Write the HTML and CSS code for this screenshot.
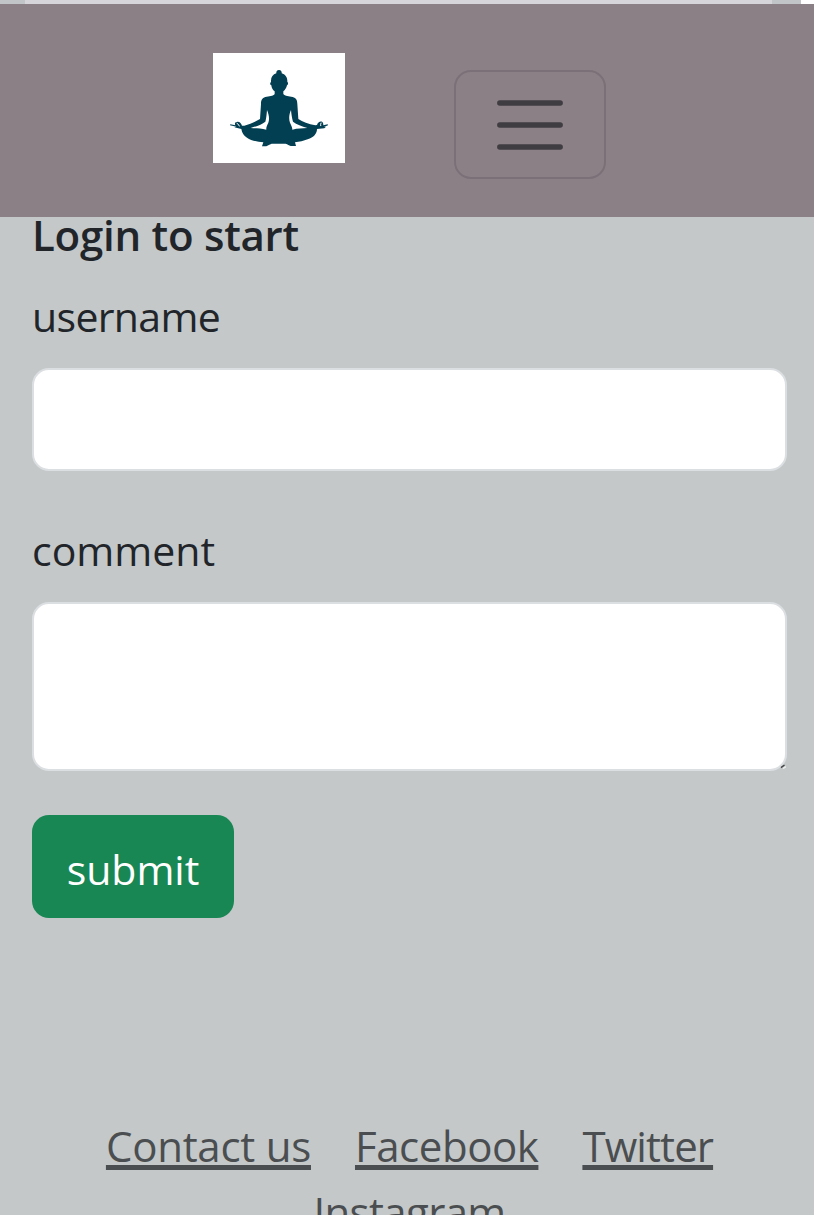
FILE: index.html
```html
<!DOCTYPE html>
<html lang="en">
<head>
<meta charset="utf-8">
<title>Login</title>
<link rel="stylesheet" href="styles.css">
</head>
<body>
<div class="top-strip"><span class="strip-mid"></span><span class="strip-end"></span></div>
<header class="navbar">
  <a class="brand" aria-label="Home">
    <svg viewBox="24 24 396 330" width="132" height="110">
      <path fill="#033f52" d="M222 75C228 75 231 80 230 85C240 88 247 96 247 107L247 111C251 113 249 120 246 121C244 129 240 135 235 139L235 147C240 154 252 153 263 156C274 159 277 166 277 177L280 222C293 230 310 237 331 241L336 240C338 232 345 228 351 230C355 233 355 238 355 241L368 238L369 241L356 246L363 245L358 250L336 252C336 266 326 277 308 283C296 288 283 290 270 292L273 303L257 303C252 301 248 298 242 296L200 296C194 298 189 301 184 304L171 304L175 292C158 290 139 287 126 278C116 272 111 264 109 252L88 247L94 245L75 241L76 238L91 241C88 234 91 230 98 230C105 230 109 236 111 242L118 242C135 237 152 230 165 222L168 177C168 166 171 159 181 156C192 153 205 154 209 147L209 139C203 135 200 129 199 121C195 120 194 113 198 111L198 107C198 96 204 88 214 85C213 80 216 75 222 75Z"/>
      <path fill="#fff" d="M186 195C192 209 194 222 190 233C187 240 183 246 184 254C167 249 151 251 137 249C155 244 171 238 181 230C184 220 185 207 186 195ZM258 195C252 209 251 222 255 233C258 240 262 246 262 254C278 249 291 251 307 249C290 244 275 238 264 230C261 220 259 207 258 195Z"/>
      <path fill="none" stroke="#fff" stroke-width="3" stroke-linecap="round" d="M96 235q5 2 7 8M348 234q-2 4-1 8"/>
    </svg>
  </a>
  <button class="toggler" aria-label="Menu">
    <svg viewBox="0 0 66 66" width="66" height="66"><path d="M2.800 11H63.200M2.800 33H63.200M2.800 55H63.200" stroke="#3f3d41" stroke-width="5.400" stroke-linecap="round"/></svg>
  </button>
</header>
<main class="content">
  <h1 class="title">Login to start</h1>
  <label class="label label-user" for="username">username</label>
  <input class="field" id="username" type="text">
  <label class="label label-comment" for="comment">comment</label>
  <div class="area-wrap">
    <textarea class="field area" id="comment"></textarea>
    <svg class="grip" viewBox="0 0 6 6" width="6" height="6"><path d="M1 4.600 4.500 2" stroke="#444" stroke-width="1.500"/><path d="M3 5.500 6 3.500" stroke="#eee" stroke-width="1.500"/></svg>
  </div>
  <button class="submit">submit</button>
</main>
<footer class="footer">
  <a class="contact">Contact us</a>
  <a class="facebook">Facebook</a>
  <a class="twitter">Twitter</a>
  <a class="instagram">Instagram</a>
</footer>
</body>
</html>
```
FILE: styles.css
```css
* { box-sizing: border-box; }
html, body { height: 1215px; overflow: hidden; }
body {
  margin: 0;
  background: #c4c8c9;
  color: #212529;
  font: 400 42px/66px "Open Sans", "Noto Sans", sans-serif;
}
.top-strip { display: flex; height: 4px; padding-left: 25px; background: #c1c5c7; }
.strip-mid { width: 747px; background: #d6d6da; }
.strip-end { width: 13px; margin-left: auto; background: #fff; }
.navbar { display: flex; align-items: flex-start; height: 213px; padding: 49px 0 0 213px; background: #8c8087; }
.brand { width: 132px; height: 110px; background: #fff; }
.brand svg, .toggler svg { display: block; }
.toggler {
  display: flex; align-items: center; justify-content: center;
  width: 152px; height: 109px; margin: 17px 0 0 109px; padding: 0;
  border: 2px solid #7b7077; border-radius: 17px; background: transparent;
}
.content { display: flex; flex-direction: column; align-items: flex-start; height: 893px; padding: 0 27px 0 32px; }
.title { height: 65px; margin: -15px 0 0; font-size: 42px; font-weight: 600; line-height: 66px; letter-spacing: -0.25px; }
.label { height: 66px; white-space: nowrap; font-size: 41px; }
.label-user { margin-top: 16px; letter-spacing: -0.65px; }
.label-comment { margin-top: 46px; }
.field {
  display: block; width: 755px; height: 103px; padding: 16px 32px;
  border: 2px solid #dcdfe2; border-radius: 17px; background: #fff;
  font: inherit; outline: 0;
}
#username { margin-top: 19px; }
.area-wrap { position: relative; margin-top: 19px; }
.area { height: 169px; resize: none; overflow: hidden; }
.grip { position: absolute; right: 1px; bottom: 2px; }
.submit {
  width: 202px; height: 103px; margin-top: 44px; padding: 4px 0 0;
  border: 0; border-radius: 17px; background: #198754; color: #fff;
  font: inherit; font-size: 41px;
}
.footer { display: flex; flex-wrap: wrap; justify-content: center; column-gap: 44px; width: 814px; padding: 3px 90px 0 95px; color: #4b4e50; }
.footer a { white-space: nowrap; text-decoration: underline; text-decoration-thickness: 4.500px; text-underline-offset: 3px; text-decoration-skip-ink: none; }
.contact { letter-spacing: -0.25px; }
.facebook { letter-spacing: -0.45px; }
.twitter { letter-spacing: -0.9px; }
.instagram { letter-spacing: -0.65px; }
```
